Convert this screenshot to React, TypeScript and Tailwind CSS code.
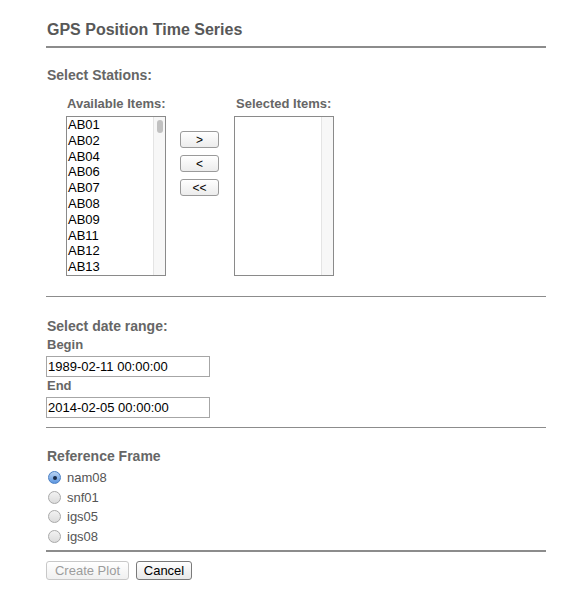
import React from 'react'

const stations = ['AB01', 'AB02', 'AB04', 'AB06', 'AB07', 'AB08', 'AB09', 'AB11', 'AB12', 'AB13']
const frames = ['nam08', 'snf01', 'igs05', 'igs08']

const labelCls = 'font-bold text-[14px] leading-[16px] text-[#666]'
const subLabelCls = 'font-bold text-[13px] leading-[14px] text-[#666]'

const Radio: React.FC<{ checked?: boolean }> = ({ checked }) =>
  checked ? (
    <span className="flex h-[13px] w-[13px] items-center justify-center rounded-full border border-[#4a7fc4] bg-gradient-to-b from-[#b9d3f2] to-[#5d97e0]">
      <span className="h-[4px] w-[4px] rounded-full bg-[#1b2c48]" />
    </span>
  ) : (
    <span className="h-[13px] w-[13px] rounded-full border border-[#a9a9a9] bg-gradient-to-b from-[#f2f2f2] to-[#dcdcdc]" />
  )

const SmallButton: React.FC<{ children: React.ReactNode }> = ({ children }) => (
  <button className="flex h-[17px] w-[39px] items-center justify-center rounded-[3px] border border-[#9a9a9a] bg-gradient-to-b from-white to-[#ececec] text-[12px] leading-none text-black">
    {children}
  </button>
)

export default function App() {
  return (
    <div className="min-h-screen bg-white font-['Liberation_Sans',Arial,sans-serif]">
      <div className="w-[500px] ml-[46px] pt-[20px]">
        <h1 className="pl-[1px] pb-[6px] border-b-2 border-[#8c8c8c] font-bold text-[16px] leading-[20px] text-[#585858]">
          GPS Position Time Series
        </h1>

        <div className={`mt-[19px] pl-[1px] ${labelCls}`}>Select Stations:</div>

        <div className="mt-[14px] ml-[20px] flex">
          <div className="flex w-[100px] flex-col">
            <div className={`pl-[1px] whitespace-nowrap ${subLabelCls}`}>Available Items:</div>
            <div className="mt-[5px] flex h-[160px] border border-[#8a8a8a] overflow-hidden">
              <div className="flex-1 pl-[1px]">
                {stations.map(s => (
                  <div key={s} className="h-[15.8px] text-[13px] leading-[15.8px] text-black">{s}</div>
                ))}
              </div>
              <div className="w-[12px] border-l border-[#e4e4e4] bg-[#f7f7f7] pt-[3px] flex justify-center">
                <div className="h-[13px] w-[6px] rounded-full bg-[#c1c1c1]" />
              </div>
            </div>
          </div>

          <div className="ml-[14px] flex flex-col gap-[7px] pt-[34px]">
            <SmallButton>&gt;</SmallButton>
            <SmallButton>&lt;</SmallButton>
            <SmallButton>&lt;&lt;</SmallButton>
          </div>

          <div className="ml-[15px] flex w-[100px] flex-col">
            <div className={`pl-[2px] whitespace-nowrap ${subLabelCls}`}>Selected Items:</div>
            <div className="mt-[5px] flex h-[160px] border border-[#8a8a8a]">
              <div className="flex-1" />
              <div className="w-[12px] border-l border-[#e4e4e4] bg-[#f7f7f7]" />
            </div>
          </div>
        </div>

        <div className="mt-[20px] border-t border-[#8c8c8c]" />

        <div className={`mt-[21px] pl-[1px] ${labelCls}`}>Select date range:</div>
        <div className={`mt-[4px] pl-[1px] ${subLabelCls}`}>Begin</div>
        <input
          readOnly
          value="1989-02-11 00:00:00"
          className="mt-[4px] block h-[21px] w-[164px] border border-[#a6a6a6] px-[1px] text-[13px] text-black outline-none"
        />
        <div className={`mt-[2px] pl-[1px] ${subLabelCls}`}>End</div>
        <input
          readOnly
          value="2014-02-05 00:00:00"
          className="mt-[4px] block h-[21px] w-[164px] border border-[#a6a6a6] px-[1px] text-[13px] text-black outline-none"
        />

        <div className="mt-[9px] border-t border-[#8c8c8c]" />

        <div className={`mt-[20px] pl-[1px] ${labelCls}`}>Reference Frame</div>
        <div className="mt-[4px] flex flex-col">
          {frames.map((f, i) => (
            <label key={f} className="flex h-[19.5px] items-center gap-[6px] pl-[2px]">
              <Radio checked={i === 0} />
              <span className="text-[13px] text-[#555]">{f}</span>
            </label>
          ))}
        </div>

        <div className="mt-[4px] border-t-2 border-[#8c8c8c]" />

        <div className="mt-[9px] flex gap-[7px]">
          <button
            disabled
            className="h-[19px] w-[83px] rounded-[3px] border border-[#c8c8c8] bg-gradient-to-b from-white to-[#f0f0f0] text-[13px] leading-none text-[#9c9c9c]"
          >
            Create Plot
          </button>
          <button className="h-[19px] w-[56px] rounded-[3px] border border-[#7a7a7a] bg-gradient-to-b from-white to-[#e8e8e8] text-[13px] leading-none text-black">
            Cancel
          </button>
        </div>
      </div>
    </div>
  )
}
